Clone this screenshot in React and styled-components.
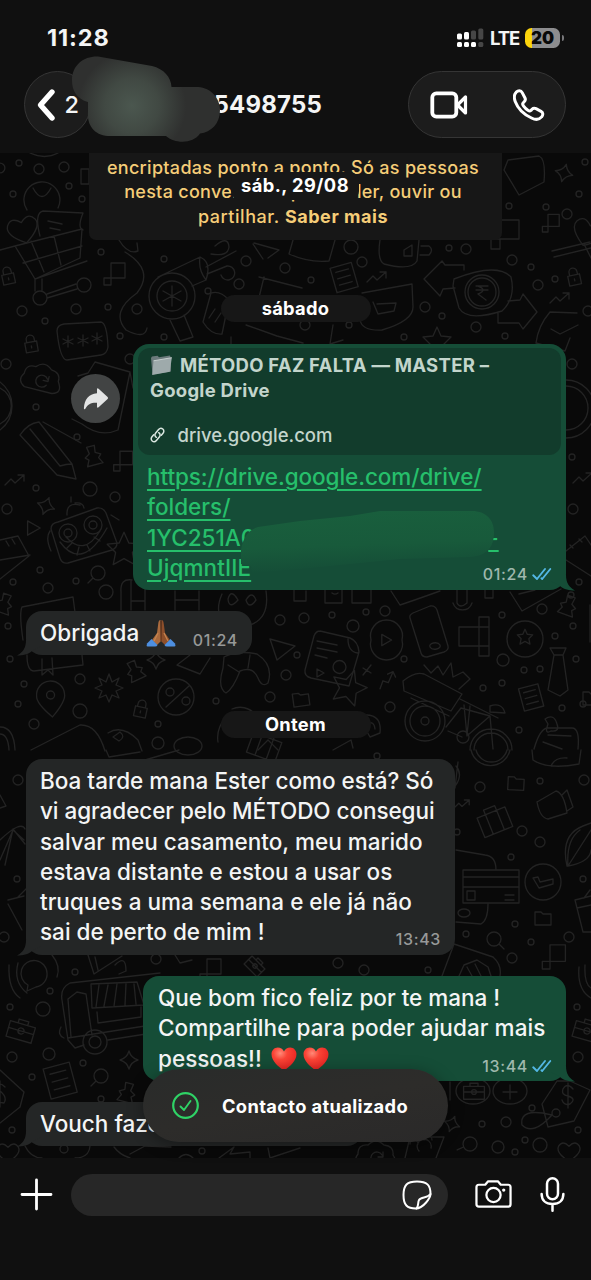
import React from 'react';
import styled, { createGlobalStyle } from 'styled-components';

const GlobalStyle = createGlobalStyle`
  * { box-sizing: border-box; }
  body { margin: 0; background: #090909; }
`;

const Screen = styled.div`
  position: relative;
  width: 591px;
  height: 1280px;
  display: flex;
  flex-direction: column;
  overflow: hidden;
  background: #090909;
  color: #f4f5f5;
  font-family: Inter, 'Liberation Sans', sans-serif;
`;

const Header = styled.header`
  position: relative;
  height: 153px;
  flex: none;
  background: #101010;
`;

const StatusBar = styled.div`
  height: 71px;
  padding: 4px 31px 0 47px;
  display: flex;
  align-items: center;
  justify-content: space-between;
`;

const Clock = styled.span`
  font-size: 23.5px;
  font-weight: 750;
  letter-spacing: 0.9px;
`;

const StatusIcons = styled.div`
  display: flex;
  align-items: center;
  gap: 6px;
`;

const Network = styled.span`
  font-size: 18.5px;
  font-weight: 650;
  letter-spacing: -1.1px;
  width: 29px;
`;

const Battery = styled.div`
  position: relative;
  width: 35px;
  height: 20px;
  border-radius: 6.5px;
  background: linear-gradient(90deg, #fcd50c 0 7px, #8d8d8f 7px);
  color: #090909;
  font-size: 17px;
  font-weight: 900;
  line-height: 20px;
  text-align: center;
  &::after {
    content: '';
    position: absolute;
    right: -4px;
    top: 7px;
    width: 2px;
    height: 6px;
    border-radius: 0 2px 2px 0;
    background: #77777a;
  }
`;

const NavBar = styled.div`
  height: 67px;
  padding: 0 25px 0 24px;
  display: flex;
  align-items: center;
  justify-content: space-between;
`;

const GlassButton = styled.div`
  height: 67px;
  width: ${(p) => p.$width}px;
  padding: ${(p) => p.$pad};
  display: flex;
  align-items: center;
  justify-content: space-between;
  border: 1.5px solid #353535;
  border-radius: 34px;
  background: #1c1c1c;
`;

const UnreadCount = styled.span`
  font-size: 23.5px;
  font-weight: 450;
`;

const ContactNumber = styled.div`
  flex: 1;
  padding: 0 86px 1px 0;
  text-align: right;
  font-size: 24px;
  font-weight: 700;
  letter-spacing: 0.2px;
`;

const HeaderSmudge = styled.svg`
  position: absolute;
  left: 70px;
  top: 54px;
`;

const Chat = styled.main`
  position: relative;
  height: 1005px;
  flex: none;
  overflow: hidden;
  padding: 0 25px;
  display: flex;
  flex-direction: column;
`;

const WallpaperSvg = styled.svg`
  position: absolute;
  inset: 0;
`;

const Notice = styled.div`
  position: relative;
  align-self: center;
  flex: none;
  width: 413px;
  height: 87px;
  padding-top: 3px;
  border-radius: 0 0 7px 7px;
  background: #171717;
  color: #f5cd78;
  text-align: center;
  font-size: 18px;
  font-weight: 500;
  line-height: 24.4px;
`;

const NoticeLine = styled.div`
  margin-right: 5px;
  white-space: nowrap;
  letter-spacing: ${(p) => p.$track}px;
  b { font-weight: 700; }
`;

const FloatingDate = styled.div`
  position: absolute;
  left: 231px;
  top: 19px;
  width: 128px;
  height: 28px;
  border-radius: 9px;
  background: #171717;
  color: #fff;
  text-align: center;
  font-size: 18.3px;
  font-weight: 750;
  letter-spacing: 0.45px;
  line-height: 27px;
`;

const DatePill = styled.div`
  position: relative;
  align-self: center;
  flex: none;
  width: 150px;
  height: 27px;
  margin: ${(p) => p.$margin};
  border-radius: 14px;
  background: #171717;
  color: #fff;
  text-align: center;
  font-size: 18.3px;
  font-weight: 750;
  letter-spacing: 0.3px;
  line-height: 27px;
`;

const Row = styled.div`
  position: relative;
  flex: none;
  display: flex;
  justify-content: ${(p) => (p.$sent ? 'flex-end' : 'flex-start')};
  align-items: flex-start;
  gap: 13px;
  margin: 0 0 21px 1px;
`;

const BubbleBox = styled.div`
  position: relative;
  width: ${(p) => p.$width}px;
  height: ${(p) => p.$height}px;
  padding: ${(p) => p.$pad || '7px 14px 0'};
  border-radius: 16px;
  background: ${(p) => (p.$sent ? '#154d37' : '#242626')};
`;

const Tail = styled.svg`
  position: absolute;
  bottom: -1px;
  ${(p) => (p.$sent ? 'right: -9px;' : 'left: -9px; transform: scaleX(-1);')}
`;

const Line = styled.div`
  height: 30.3px;
  display: flex;
  align-items: center;
  white-space: nowrap;
  font-size: 22.5px;
  font-weight: 500;
  line-height: 30.3px;
  letter-spacing: ${(p) => p.$track || 0}px;
`;

const Emoji = styled.span`
  display: flex;
  margin-left: ${(p) => p.$gap}px;
`;

const Meta = styled.span`
  margin-left: auto;
  margin-right: ${(p) => p.$right || 0}px;
  padding-top: ${(p) => p.$top || 14}px;
  display: flex;
  align-items: center;
  gap: 4px;
  color: ${(p) => (p.$sent ? '#9fb8ad' : '#979998')};
  font-size: 16px;
  font-weight: 500;
  letter-spacing: 0.65px;
`;

const Preview = styled.div`
  height: 107px;
  margin-bottom: 7px;
  padding: 4px 12px;
  border-radius: 12px;
  background: #123c2c;
  color: #c3d5cc;
`;

const PreviewTitle = styled.div`
  display: flex;
  align-items: center;
  gap: 7px;
  height: 25.6px;
  white-space: nowrap;
  font-size: 18.5px;
  font-weight: 700;
  letter-spacing: 0.27px;
`;

const PreviewDomain = styled.div`
  display: flex;
  align-items: center;
  gap: 12.5px;
  margin-top: 19px;
  height: 26px;
  font-size: 18.5px;
  font-weight: 500;
`;

const LinkLine = styled(Line)`
  margin-left: 9px;
  color: #26bf6b;
`;

const LinkText = styled.span`
  text-decoration: underline;
  text-decoration-thickness: 2px;
  text-underline-offset: 3.5px;
  margin-left: ${(p) => p.$gap || 0}px;
`;

const LinkFooter = styled.div`
  display: flex;
`;

const LinkSmudge = styled.svg`
  position: absolute;
  left: 107px;
  top: 164px;
`;

const ForwardButton = styled.div`
  width: 49px;
  height: 49px;
  margin-top: 30px;
  display: flex;
  align-items: center;
  justify-content: center;
  border-radius: 50%;
  background: #424444;
`;

const Toast = styled.div`
  position: absolute;
  left: 143px;
  top: 1069px;
  width: 305px;
  height: 73px;
  padding-left: 28px;
  display: flex;
  align-items: center;
  gap: 22px;
  border-radius: 37px;
  background: linear-gradient(170deg, #292b2a, #2d2c2a 50%, #2a2929);
  box-shadow: 0 3px 16px rgba(0, 0, 0, 0.35);
  color: #fff;
  font-size: 18.3px;
  font-weight: 750;
  letter-spacing: 0.35px;
`;

const Composer = styled.footer`
  height: 122px;
  padding: 16px 24px 0 20px;
  display: flex;
  align-items: flex-start;
  background: #101010;
`;

const Input = styled.div`
  flex: none;
  width: 377px;
  height: 42px;
  margin: 0 27px 0 18px;
  padding-right: 16px;
  display: flex;
  align-items: center;
  justify-content: flex-end;
  border-radius: 21px;
  background: #272727;
`;

const IconSlot = styled.div`
  flex: none;
  height: 40px;
  display: flex;
  align-items: center;
  margin-right: ${(p) => p.$right || 0}px;
`;

const stroke = (w) => ({
  fill: 'none', stroke: '#fff', strokeWidth: w, strokeLinecap: 'round', strokeLinejoin: 'round',
});

const Signal = () => (
  <svg width="27" height="20" viewBox="0 0 27 20">
    <g fill="#fff">
      <rect x="0" y="5.5" width="5" height="6" rx="1.5" />
      <rect x="7" y="4" width="5" height="7.5" rx="1.5" />
      <rect x="0" y="14" width="5" height="5" rx="1.5" />
      <rect x="7" y="14" width="5" height="5" rx="1.5" />
      <rect x="14" y="14" width="5" height="5" rx="1.5" />
    </g>
    <g fill="#464646">
      <rect x="14" y="2.5" width="5" height="9" rx="1.5" />
      <rect x="21.3" y="0.5" width="5" height="11" rx="1.5" />
      <rect x="21.3" y="14" width="5" height="5" rx="1.5" />
    </g>
  </svg>
);

const Ticks = () => (
  <svg width="20" height="14" viewBox="0 0 20 14" fill="none" stroke="#53b7e4" strokeWidth="1.9" strokeLinecap="round" strokeLinejoin="round">
    <path d="M1.2 8.3 5 12 13 2" />
    <path d="M9.4 11.3 10.2 12 18.3 2" />
  </svg>
);

const Hands = () => (
  <svg width="30" height="28" viewBox="0 0 30 28">
    <path d="M14.5 1C13 1 12.5 2.5 12.2 5L11 14 6 21l5 5 4-4Z" fill="#aa6a3d" />
    <path d="M15.5 1C17 1 17.5 2.5 17.8 5L19 14l5 7-5 5-4-4Z" fill="#8d4f2b" />
    <path d="M15 2v20" stroke="#5b2f19" strokeWidth="1" />
    <path d="M12 14 8 22M18 14l4 8" stroke="#c58450" strokeWidth="1.3" />
    <path d="M5.5 20 11.5 26Q11 27.5 9 27.5H1.5Q0 27 1 24.5Z" fill="#4e8fe0" />
    <path d="M24.5 20 18.5 26Q19 27.5 21 27.5h7.500Q30 27 29 24.500Z" fill="#4e8fe0" />
  </svg>
);

const Heart = () => (
  <svg width="26" height="24" viewBox="0 0 27 25">
    <defs>
      <radialGradient id="heartRed" cx="0.35" cy="0.25" r="0.8">
        <stop offset="0" stopColor="#ff8a78" />
        <stop offset="0.35" stopColor="#fb4436" />
        <stop offset="1" stopColor="#e3201f" />
      </radialGradient>
    </defs>
    <path d="M13.500 24.500C7.500 20.500 0.500 14.500 0.500 7.600 0.500 3.600 3.400 0.600 7 0.600c2.900 0 5.200 1.600 6.500 4.200C14.800 2.200 17.100 0.600 20 0.600c3.600 0 6.500 3 6.500 7 0 6.900-7 12.900-13 16.900Z" fill="url(#heartRed)" />
  </svg>
);

const Folder = () => (
  <svg width="23" height="22" viewBox="0 0 23 22">
    <path d="M1 4 2 2.500l5.500-.7L9 3.300 20 1.500l1 3v13L2.500 20.500Z" fill="#6b7a7b" />
    <path d="M3.500 6.800 21.800 3.700 19.800 17.800 2.200 21Z" fill="#9eaaab" />
    <path d="M3.500 6.800 21.800 3.700" stroke="#c5cecd" strokeWidth="1" />
  </svg>
);

const LinkIcon = () => (
  <svg width="15" height="16" viewBox="0 0 15 16" fill="none" stroke="#dce8e2" strokeWidth="1.500" strokeLinecap="round">
    <path d="M6.300 10.300C4.600 9.300 4.500 7.300 5.700 5.900L8.600 2.500c1.200-1.400 3-1.500 4.200-.5s1.400 2.800.2 4.200L11.300 8.200" />
    <path d="M8.700 5.700c1.700 1 1.800 3 .6 4.400l-2.900 3.400c-1.200 1.400-3 1.500-4.200.5s-1.400-2.800-.2-4.200L3.700 7.800" />
  </svg>
);

const shapes = {
  lock: 'M-6-2H6V8H-6ZM-4-2V-5A4 4 0 0 1 4-5V-2M0 2V4',
  sparkle: 'M0-9Q2-2 9 0Q2 2 0 9Q-2 2-9 0Q-2-2 0-9Z',
  trend: 'M-10 5-4-1 0 3 9-5M3-5H9V1',
  note: 'M-10-11H10V12H-10ZM-6-6H6M-6 0H6M-6 6H6',
  folder: 'M-8-6H-2L0-4H8V7H-8Z',
  star: 'M0-14 4-5 14-4 7 3 9 13 0 8-9 13-7 3-14-4-4-5Z',
  burst: 'M0-14 3-6 10-10 7-3 14 0 7 3 10 10 3 7 0 14-3 7-10 10-7 3-14 0-7-3-10-10-3-6Z',
  pin: 'M0 17Q-15 2-14-5A14 14 0 0 1 14-5Q15 2 0 17ZM4-5A4 4 0 1 0-4-5A4 4 0 1 0 4-5',
  squares: 'M0-12H14V3H0ZM-7 3H0V10H-7Z',
  bag: 'M-15-8H15V13H-15ZM-6-8V-13H6V-8M-6-8V13M6-8V13',
  case: 'M-13-7H13V9H-13ZM-5-7V-11H5V-7M-13 0H13M-3 0A3 3 0 1 0 3 0A3 3 0 1 0-3 0',
  pawn: 'M-4-10H4L3-3 8 0 5 3 8 9H-8L-5 3-8 0-3-3Z',
  lens: 'M7 0A7 7 0 1 0-7 0A7 7 0 1 0 7 0M-5 5-10 10',
  heart: 'M0 13Q-17 2-13-6-8-14 0-6 8-14 13-6 17 2 0 13Z',
  play: 'M-6-8 8 0-6 8Z',
  cloud: 'M-15 9Q-24 4-18-4-18-14-8-13 0-21 8-13 18-12 17-3 24 8 13 10ZM6-3A6 6 0 1 0 6 3M7-6V-1H2',
};

const doodles = [
  ['lock', 8, 276, 1, -12], ['lock', 31, 344, 1, -10], ['lock', 141, 709, 1, 12], ['lock', 574, 277, 1, -12],
  ['sparkle', 46, 506, 1, 20], ['sparkle', 129, 1060, 1, 0], ['sparkle', 564, 173, 1, 15], ['sparkle', 452, 1124, 0.9, 20], ['sparkle', 156, 660, 1, 0],
  ['trend', 15, 480, 1, 0], ['trend', 377, 277, 1, 0], ['trend', 560, 298, 1, 0], ['trend', 583, 478, 1, 0], ['trend', 387, 680, 1, -25], ['trend', 462, 804, 0.8, 0],
  ['note', 344, 277, 1.1, -16], ['note', 531, 697, 1, -15], ['note', 60, 1080, 1.35, -15],
  ['folder', 301, 699, 1, -8], ['folder', 516, 783, 1, 3], ['folder', 543, 918, 1, 0], ['folder', 591, 698, 1, 0],
  ['star', 349, 687, 1.25, 18], ['star', 124, 549, 1.2, 0], ['star', 437, 341, 1, 0], ['star', 525, 637, 0.55, 0], ['burst', 109, 688, 1, 0],
  ['pin', 51, 700, 1, -5], ['squares', 111, 275, 1, 0], ['squares', 120, 462, 0.9, 0], ['squares', 548, 224, 0.8, 0], ['squares', 207, 971, 1, 0], ['squares', 550, 958, 1.1, 0],
  ['bag', 494, 820, 1, -22], ['case', 21, 1031, 1, 16], ['case', 587, 1031, 1, 16], ['case', 474, 1092, 0.8, 0], ['pawn', 93, 456, 1, -15], ['pawn', 135, 671, 1, -25], ['pawn', 568, 606, 1, 20], ['pawn', 127, 1093, 1, 15],
  ['lens', 101, 1076, 1, 0], ['lens', 98, 573, 1, 0], ['lens', 494, 939, 1, -90], ['lens', 470, 1144, 1, 20],
  ['heart', 23, 229, 1.1, -15], ['heart', 569, 1151, 0.8, 0], ['heart', 8, 1152, 0.8, 0], ['heart', 588, 232, 1.1, 20],
  ['play', 33, 528, 0.9, 0], ['play', 386, 640, 0.7, 0], ['play', 320, 673, 0.5, 0], ['cloud', 41, 381, 1, 12], ['cloud', 376, 1158, 1, 0],
  ['lens', 0, 168, 0.7, 0], ['pawn', 4, 604, 1, 20], ['case', 255, 966, 0.7, 45], ['bag', 265, 745, 1, 20],
];

const bubbles = `19,163,3 39,169,5 64,167,5 13,194,3 69,186,3 82,199,3 101,252,3 164,259,3 246,261,5 208,291,3 239,284,5 76,309,5 22,311,5 45,321,3 108,307,3 137,309,5 120,336,3 164,337,3 285,268,5 6,364,5 36,407,3 77,437,3 130,359,5 585,162,3 579,194,3 509,206,3 546,207,3 567,214,5 351,247,7 362,262,5 449,248,3 466,249,5 512,260,5 531,267,3 538,285,5 555,279,3 588,311,5 425,307,5 442,316,3 476,327,5 505,336,3 311,280,3 404,337,3 349,325,3 572,364,5 90,489,7 115,497,5 36,488,3 7,509,5 40,570,3 13,582,3 48,588,5 76,581,3 106,592,7 8,626,3 10,659,3 24,684,3 18,704,3 80,679,5 34,724,5 80,711,7 158,724,3 158,743,6 216,701,3 270,697,5 280,620,5 286,675,5 572,457,3 573,509,5 579,582,3 571,595,3 304,618,5 332,615,3 366,612,3 385,611,5 353,626,6 404,659,3 297,655,3 542,609,5 502,615,3 555,636,3 573,626,3 503,660,6 524,670,3 540,669,3 576,659,3 483,688,3 502,683,3 390,707,5 519,730,3 562,708,3 583,704,3 480,787,5 540,781,3 584,780,5 522,831,5 540,842,5 457,832,3 511,857,3 583,879,3 515,924,3 466,934,3 531,942,3 569,937,5 512,958,5 338,963,5 364,970,5 428,970,3 377,756,3 18,780,5 17,879,3 4,937,5 156,959,5 75,972,3 50,991,3 10,1007,3 43,1009,7 49,1054,6 12,1057,5 83,1063,3 32,1077,3 12,1130,3 64,1149,4 202,1151,3 101,1099,3 577,1007,3 578,1057,5 532,1108,3 506,1122,5 482,1124,3 578,1130,3 525,1140,3 498,1147,6 515,1152,3 540,1145,7`
  .split(' ').map((s) => s.split(',').map(Number));

const scenes = [
  // shopping cart
  'M0 250 15 246 35 279 80 258 82 229 15 246M23 263 82 246M31 241 44 272M54 236 61 265M35 279 87 261M35 279V291M42 279V290M47 294 76 284M47 298 77 289M47 298A7 7 0 1 0 33 298A7 7 0 1 0 47 298M91 285A7 7 0 1 0 77 285A7 7 0 1 0 91 285',
  'M40 236Q34 213 43 211L83 213Q77 228 83 230M48 221 62 224M50 228 60 230M27 210A18 18 0 1 1 58 208M33 188Q42 205 51 188M30 153Q45 160 58 153',
  // hair dryer
  'M195 296A23 23 0 1 0 149 296A23 23 0 1 0 195 296M187 296A15 15 0 1 0 157 296A15 15 0 1 0 187 296M172 286V306M163 291 181 301M181 291 163 301M158 277 200 257Q212 262 206 280L192 286M200 257Q198 270 206 280M206 267 236 251M207 274 227 266A7 7 0 1 1 221 275M215 246Q228 235 229 247 228 257 211 254',
  'M170 320 180 341 193 337 184 315M125 252Q155 270 137 293 110 312 126 330 145 340 147 328M119 240Q128 255 138 251L137 243',
  // masked password box
  'M64 324 101 322Q107 323 108 347 107 354 101 355L67 360Q60 360 57 331 57 325 64 324M68 336V347M63 339 73 344M73 339 63 344M83 335V346M78 338 88 343M88 338 78 343M97 333V344M92 336 102 341M102 336 92 341',
  // shipping crate with arrow
  'M211 293Q220 290 229 300L222 334Q211 335 203 322ZM209 318 215 309M215 322 221 313M259 277 302 288M264 277 256 310M246 325 277 336 303 343M310 325A5 5 0 1 0 300 325A5 5 0 1 0 310 325M333 325 330 344 343 340M254 243 279 250 268 258M253 244 263 259M231 337 231 345',
  // rupee banknote with exchange arrows
  'M454 279Q497 262 511 277 516 298 502 311 467 322 459 308L453 286ZM499 292A17 17 0 1 0 465 292A17 17 0 1 0 499 292M496 292A13 13 0 1 0 468 292A13 13 0 1 0 496 292M476 286H488M476 290H488M478 286Q488 290 478 294L486 300M464 270V265H445L442 261 424 279 440 296 443 289 455 288M498 312V323H519L523 329 537 312 523 294 520 300 508 301',
  'M362 293Q390 288 412 284L413 307Q413 321 382 330 362 331 360 320M373 302 378 314 394 311 396 303 377 304M293 240 289 254Q309 263 329 261L335 240M380 240Q377 260 384 264 411 271 417 261L419 240M404 250 412 245V256H404ZM421 246H429Q434 250 429 255H420',
  'M508 160 539 156Q546 159 544 182L519 195 504 170ZM501 220H519V239H491V249H500V239M81 169H89V184H81ZM552 251 590 242M554 257 591 248M577 313 550 312Q538 326 536 343L565 351 570 338M551 329 560 334 578 325M584 244 591 258',
  // pencil and receipt
  'M20 435Q28 423 39 422L72 464 76 479 57 475 20 435M30 429 60 466Q66 464 72 464M43 422 81 443M95 362 130 372 118 430Q100 438 82 424L72 419M95 362 88 373 78 376M130 372 133 388M0 382A30 30 0 0 1 0 430M0 388A20 20 0 0 1 0 424M566 380A28 28 0 0 1 566 438M566 386A22 22 0 0 1 566 430',
  // robot
  'M51 529Q51 523 58 522L97 508Q103 507 106 513L117 543Q117 548 112 550L68 563Q62 564 60 558ZM77 533A9 9 0 1 0 59 533A9 9 0 1 0 77 533M72 533A4 4 0 1 0 64 533A4 4 0 1 0 72 533M102 525A9 9 0 1 0 84 525A9 9 0 1 0 102 525M97 525A4 4 0 1 0 89 525A4 4 0 1 0 97 525M60 542Q82 572 107 528M66 537Q84 557 100 531M67 548 72 543M77 555 79 547M90 551 87 545M100 541 94 537M67 515Q66 502 80 505M84 508Q83 502 75 503M71 502V497M50 531Q45 538 51 551M111 515 119 520M0 560 30 555M0 540 18 536 29 556 0 579M6 541 9 546M12 539 15 544',
  'M121 592Q120 578 132 580M121 592V610M131 581V610M145 580V610M132 601H145M175 591V610M199 591V610M175 600H199M22 607 73 597 76 620M22 607Q19 613 23 640M27 655Q27 671 34 671L83 665 82 655M42 659V675L48 670 53 675 52 658M222 594Q215 610 222 619M266 591Q270 618 250 625M228 599Q231 588 238 600 229 610 228 599M246 600Q252 590 256 600 249 610 246 600M190 655 177 665 200 674 210 658',
  // croissant
  'M224 657Q237 650 257 654 274 665 268 683 262 688 258 678 253 666 240 671 233 689 226 693 217 688 223 668ZM228 665 239 672M250 655 248 668M270 639 295 646 277 660Z',
  'M194 697A18 18 0 1 0 158 697A18 18 0 1 0 194 697M166 707 189 686M174 692A4 4 0 1 0 166 692A4 4 0 1 0 174 692M190 701A4 4 0 1 0 182 701A4 4 0 1 0 190 701',
  'M31 750 80 725Q97 724 105 751M108 733Q122 724 138 740L142 751M113 737 120 732Q126 737 119 741ZM0 727Q14 727 15 750M0 734Q8 734 9 750M174 746A14 9 0 1 0 202 746A14 9 0 1 0 174 746M218 742A28 28 0 0 1 229 715M232 709A20 20 0 0 1 255 714M258 750 268 740 278 750M333 750 351 740 353 748M366 715Q382 715 380 733L370 737 366 730M367 724Q374 720 375 729',
  // media card, play disc and phone
  'M320 631 350 638Q358 641 359 652L349 686 311 678Q304 676 305 670L314 636Q316 631 320 631M348 639Q348 652 358 653M317 641 337 645M317 648 337 652M315 655 327 658M346 667A6 6 0 1 0 333 667A6 6 0 1 0 346 667M402 640A16 16 0 1 0 371 640A16 16 0 1 0 402 640M413 613 430 606Q435 605 437 610L448 646Q449 650 444 652L427 657Q422 657 421 653L410 618Q409 615 413 613M430 647A5 3 0 1 0 440 645A5 3 0 1 0 430 647M363 668 371 673M371 665 363 675',
  'M459 627H489V646H459ZM479 617H489V656H479ZM543 639A18 18 0 1 0 507 639A18 18 0 1 0 543 639M550 648H566L563 655 568 690 560 696 548 690 554 655ZM554 655H563M294 590V601H306V591M325 590V603H342V590M352 590V603H371V590M332 593A5 5 0 0 0 338 593M391 591 400 605Q415 600 440 591M453 603A10 10 0 0 0 472 603M457 590V603Q460 609 467 603V590M485 590V598H493V590M510 592 522 611 561 589M519 594 535 590M590 605V642',
  'M566 551 585 536 591 545M566 560 591 576M570 545 573 548M579 539 582 542',
  // bicycle carrying a basket
  'M445 721A20 20 0 1 0 405 721A20 20 0 1 0 445 721M440 721A15 15 0 1 0 410 721A15 15 0 1 0 440 721M429 721A4 4 0 1 0 421 721A4 4 0 1 0 429 721M470 750A20 20 0 1 1 512 750M474 750A16 16 0 0 1 508 750M403 681Q415 671 424 674L462 694 451 711 404 691ZM411 698 449 716M424 665 431 673 438 666 443 675 451 663 453 677 463 672 470 679 459 689M446 727 461 708 490 716 493 749M464 705 467 736M470 706 467 735M468 735 490 716M460 699 498 718M490 706Q502 702 505 713L490 712ZM448 731 462 737M469 737A6 6 0 1 0 457 737A6 6 0 1 0 469 737',
  'M534 749Q540 728 548 728H572Q580 728 578 749M548 735 571 736M543 742 562 749M545 719Q554 713 557 724 560 732 551 731 544 735 548 724Z',
  'M510 750A20 20 0 0 1 471 750M507 750A16 16 0 0 1 476 750M532 750 533 760Q548 770 579 764L581 750M551 766Q555 757 567 758M106 750 109 757 140 752M145 760 179 750M0 795 6 806 0 808M0 840Q21 820 25 829M0 860 13 830 24 840M5 865 13 829 25 844M8 900 24 896M8 904 22 930M18 897 27 888',
  // video camera, credit card and check disc
  'M537 802 556 791Q564 793 567 813L548 819Q540 818 537 802M562 795 567 790 573 807 567 811M456 850 485 855Q496 856 496 870M463 870H519V903H463ZM463 877H519M463 887H519M467 891H475V900H467ZM505 895H514M505 900H514M456 922 481 924Q488 920 488 904M458 913A6 4 0 1 0 470 913A6 4 0 1 0 458 913M561 882A18 18 0 1 0 525 882A18 18 0 1 0 561 882M533 878 538 877 540 882 553 879 553 884 539 888Z',
  'M567 866Q560 835 583 826L591 823M568 866Q566 840 580 830M568 866 591 830M568 866Q590 862 591 850M575 900 591 896M575 900 583 932H591M577 908 591 905M584 898 590 890M458 762Q455 788 455 788M456 766Q463 774 456 785M442 976 454 944 493 957Q502 965 500 976M459 976 464 965 477 960 488 967 491 976M467 967 472 976M475 964 481 976M579 967Q577 990 591 998M585 965Q584 984 591 988',
  // delivery van
  'M62 1000Q60 988 70 983L160 973M62 1000 68 1040 75 1048 84 1045M68 1038 145 1026M108 1040 146 1034M68 999 77 992 86 994 92 1035M68 999 71 1037M91 984 137 982 144 1005 92 1008ZM99 985 96 1007M108 985 104 1006M117 984 114 1006M126 984 125 1005M134 984 136 1004M97 1012 98 1023 141 1017V1007M107 1042A12 12 0 1 0 83 1042A12 12 0 1 0 107 1042M101 1042A6 6 0 1 0 89 1042A6 6 0 1 0 101 1042M61 1027Q57 1035 64 1038',
  'M47 973A13 13 0 1 0 28 985L27 991 36 987A13 13 0 0 0 47 973M18 963Q13 982 27 993M9 965Q8 990 20 998M52 955Q61 966 57 977M88 955 94 974 122 956M98 970 95 957M115 965Q126 954 126 971L119 974M175 955 180 963 192 960',
  // price tags and coins
  'M0 1070 24 1092 20 1107 0 1123M5 1087Q-2 1080-1 1090 8 1097 4 1103L-2 1102M0 1081V1107M542 1104 557 1081H570L590 1090 574 1121 548 1127ZM573 1089Q567 1082 563 1089 561 1095 568 1096 577 1099 570 1104 564 1106 562 1100M568 1083V1108M560 1113A4 4 0 1 0 552 1113A4 4 0 1 0 560 1113M552 1115Q519 1107 522 1125 533 1136 552 1115M456 1091A17 13 0 1 0 490 1091A17 13 0 1 0 456 1091M493 1091A17 13 0 1 0 527 1091A17 13 0 1 0 493 1091M510 1085V1099M503 1092H517M450 1082V1100',
  'M405 1158 410 1137 444 1137 436 1158M418 1144A4 4 0 1 0 410 1144M432 1140A4 4 0 1 0 424 1140M431 1148A7 7 0 1 0 419 1151M25 1146Q31 1158 42 1158M90 1146Q89 1158 75 1158M114 1147Q120 1155 130 1158M130 1154 145 1146 171 1147M179 1158Q186 1151 193 1158M219 1158 234 1147 230 1154 250 1152V1158M268 1148 270 1158 300 1148',
];

const Wallpaper = () => (
  <WallpaperSvg width="591" height="1005" viewBox="0 153 591 1005" fill="none" stroke="#232323" strokeWidth="1.35" strokeLinejoin="round" strokeLinecap="round">
    {scenes.map((d, i) => <path key={i} d={d} />)}
    {bubbles.map(([x, y, r], i) => <circle key={i} cx={x} cy={y} r={r} />)}
    {doodles.map(([name, x, y, s, a], i) => (
      <path key={i} d={shapes[name]} transform={`translate(${x} ${y}) rotate(${a}) scale(${s})`} strokeWidth={1.35 / s} />
    ))}
  </WallpaperSvg>
);

function Bubble({ sent, width, height, pad, children }) {
  return (
    <BubbleBox $sent={sent} $width={width} $height={height} $pad={pad}>
      <Tail $sent={sent} width="24" height="16" viewBox="0 0 24 16">
        <path d="M15 0C15 8 18 12 24 15.500 18 15.500 13 14.500 9 11L0 6V0Z" fill={sent ? '#154d37' : '#242626'} />
      </Tail>
      {children}
    </BubbleBox>
  );
}

export default function App() {
  return (
    <Screen>
      <GlobalStyle />
      <Header>
        <StatusBar>
          <Clock>11:28</Clock>
          <StatusIcons>
            <Signal />
            <Network>LTE</Network>
            <Battery>20</Battery>
          </StatusIcons>
        </StatusBar>
        <NavBar>
          <GlassButton $width={67} $pad="0 11px 0 11px">
            <svg width="20" height="34" viewBox="0 0 20 34" {...stroke(5.4)}><path d="M16 4 4.500 17 16 30" /></svg>
            <UnreadCount>2</UnreadCount>
          </GlassButton>
          <ContactNumber>5498755</ContactNumber>
          <GlassButton $width={158} $pad="0 20px 0 21px">
            <svg width="38" height="28" viewBox="0 0 38 28" {...stroke(3.8)}>
              <rect x="2.300" y="2.300" width="24" height="23.400" rx="4" />
              <path d="M28.500 13 35.500 6V22L28.500 15Z" strokeWidth="3.200" />
            </svg>
            <svg width="32" height="32" viewBox="0 0 32 32" {...stroke(3)}>
              <path d="M3.200 3.200C5 1.500 8 1.200 9.200 3.600L12 9C12.800 10.600 12.400 11.700 11 13L10 14C9.300 15 9.600 15.800 10.400 16.800 12 19 13.500 20.300 15.200 21.400 16.200 22.200 17 22.300 18 21.400L19 20.300C20.300 19 21.500 19 23 19.700L28 22.300C30.300 23.500 30.300 26 28.600 27.900 26.500 30.400 22.500 31 18.500 29 10.500 25.300 4.500 18.600 2.200 12.500 0.800 8.600 1 5.400 3.200 3.200Z" />
            </svg>
          </GlassButton>
        </NavBar>
        <HeaderSmudge width="152" height="90" viewBox="70 54 152 90">
          <defs>
            <radialGradient id="smudge" gradientUnits="userSpaceOnUse" cx="132" cy="106" r="54">
              <stop offset="0" stopColor="#4b574f" />
              <stop offset="0.500" stopColor="#414943" />
              <stop offset="1" stopColor="#2f302f" />
            </radialGradient>
          </defs>
          <path d="M72 80C72 65 84 56 98 56.500L152 66C164 69 171 77 171.500 87H198C211 88 220 98 220 110 220 124 211 132 200 133.500 193 144 175 144 166 136H108C94 135 87 125 88 112L88 102C77 99 72 91 72 80Z" fill="url(#smudge)" />
        </HeaderSmudge>
      </Header>

      <Chat>
        <Wallpaper />
        <Notice>
          <NoticeLine $track={0.3}>encriptadas ponto a ponto. Só as pessoas</NoticeLine>
          <NoticeLine $track={0.3}>nesta conversa as podem ler, ouvir ou</NoticeLine>
          <NoticeLine $track={0.55}>partilhar. <b>Saber mais</b></NoticeLine>
        </Notice>
        <FloatingDate>sáb., 29/08</FloatingDate>

        <DatePill $margin="55px 0 22px">sábado</DatePill>

        <Row $sent>
          <ForwardButton>
            <svg width="26" height="24" viewBox="0 0 26 24" fill="#e3e4e4">
              <path d="M14 2.500Q14 0.500 15.600 1.800L24.600 10Q25.600 11 24.600 12L15.600 20.300Q14 21.500 14 19.500V15.800C8 15.500 4.600 17.500 2.500 21.600 1.800 22.800 0.800 22.300 0.900 21 1.500 12.500 5.500 7 14 6.300Z" />
            </svg>
          </ForwardButton>
          <Bubble sent width={433} height={246} pad="4px 5px 0 5px">
            <Preview>
              <PreviewTitle><Folder />MÉTODO FAZ FALTA — MASTER –</PreviewTitle>
              <PreviewTitle>Google Drive</PreviewTitle>
              <PreviewDomain><LinkIcon />drive.google.com</PreviewDomain>
            </Preview>
            <LinkLine $track={-0.08}><LinkText>https://drive.google.com/drive/</LinkText></LinkLine>
            <LinkLine><LinkText>folders/</LinkText></LinkLine>
            <LinkLine><LinkText>1YC251A0</LinkText><LinkText $gap={233}>-</LinkText></LinkLine>
            <LinkFooter>
              <LinkLine $track={0.1}><LinkText>UjqmntIIE</LinkText></LinkLine>
              <Meta $sent $right={9} $top={11}>01:24<Ticks /></Meta>
            </LinkFooter>
            <LinkSmudge width="258" height="66" viewBox="240 508 258 66">
              <defs>
                <linearGradient id="linkSmudge" x1="0" x2="0.150" y1="0" y2="1">
                  <stop offset="0" stopColor="#195f3d" />
                  <stop offset="0.600" stopColor="#185a3b" />
                  <stop offset="1" stopColor="#154d37" />
                </linearGradient>
              </defs>
              <path d="M241 550C243 538 248 530 258 527L300 521 350 516 380 511H472C486 511 494 520 494 532 494 548 486 556 470 557L400 559 300 569 252 573 251 566 241 564Z" fill="url(#linkSmudge)" />
            </LinkSmudge>
          </Bubble>
        </Row>

        <Row>
          <Bubble width={226} height={44}>
            <Line>Obrigada<Emoji $gap={7}><Hands /></Emoji><Meta $top={13}>01:24</Meta></Line>
          </Bubble>
        </Row>

        <DatePill $margin="35px 0 21px">Ontem</DatePill>

        <Row>
          <Bubble width={429} height={196}>
            <Line>Boa tarde mana Ester como está? Só</Line>
            <Line $track={-0.06}>vi agradecer pelo MÉTODO consegui</Line>
            <Line>salvar meu casamento, meu marido</Line>
            <Line>estava distante e estou a usar os</Line>
            <Line>truques a uma semana e ele já não</Line>
            <Line>sai de perto de mim !<Meta>13:43</Meta></Line>
          </Bubble>
        </Row>

        <Row $sent>
          <Bubble sent width={423} height={105} pad="7px 14px 0 15px">
            <Line>Que bom fico feliz por te mana !</Line>
            <Line $track={0.06}>Compartilhe para poder ajudar mais</Line>
            <Line>pessoas!!<Emoji $gap={9}><Heart /></Emoji><Emoji $gap={6}><Heart /></Emoji><Meta $sent>13:44<Ticks /></Meta></Line>
          </Bubble>
        </Row>

        <Row>
          <Bubble width={337} height={44}>
            <Line>Vouch fazer</Line>
          </Bubble>
        </Row>
      </Chat>

      <Composer>
        <IconSlot>
          <svg width="33" height="33" viewBox="0 0 33 33" {...stroke(2.8)}><path d="M16.500 2V31M2 16.500H31" /></svg>
        </IconSlot>
        <Input>
          <svg width="30" height="30" viewBox="0 0 30 30" {...stroke(2)}>
            <path d="M14 28.500C5 28.500 1.500 25 1.500 15S5 1.500 15 1.500 28.500 5 28.500 14C28.500 18 21 28.500 14 28.500Z" />
            <path d="M14.500 28.500C17 26 15.500 22.500 17 20 19 16.500 25.500 18.500 28.500 14" />
          </svg>
        </Input>
        <IconSlot $right={28}>
          <svg width="37" height="30" viewBox="0 0 38 30" {...stroke(2.3)}>
            <path d="M4 5.500H10.500L13.500 2H23.500L26.500 5.500H34Q36.500 5.500 36.500 8V25.500Q36.500 28 34 28H4Q1.500 28 1.500 25.500V8Q1.500 5.500 4 5.500Z" />
            <circle cx="19" cy="16" r="7.300" />
            <circle cx="29.500" cy="11" r="1" fill="#fff" strokeWidth="1.400" />
          </svg>
        </IconSlot>
        <IconSlot>
          <svg width="25" height="37" viewBox="0 0 26 38" {...stroke(2.6)}>
            <rect x="7.300" y="2" width="11.400" height="22" rx="5.700" />
            <path d="M1.700 18.500C1.700 25 6 29 13 29S24.300 25 24.300 18.500M13 29V36" />
          </svg>
        </IconSlot>
      </Composer>

      <Toast>
        <svg width="29" height="29" viewBox="0 0 29 29" {...stroke(2.2)} stroke="#2fd266">
          <circle cx="14.500" cy="14.500" r="12.300" />
          <path d="M9.500 15.500 13 19 19.500 10" strokeWidth="1.900" />
        </svg>
        Contacto atualizado
      </Toast>
    </Screen>
  );
}
